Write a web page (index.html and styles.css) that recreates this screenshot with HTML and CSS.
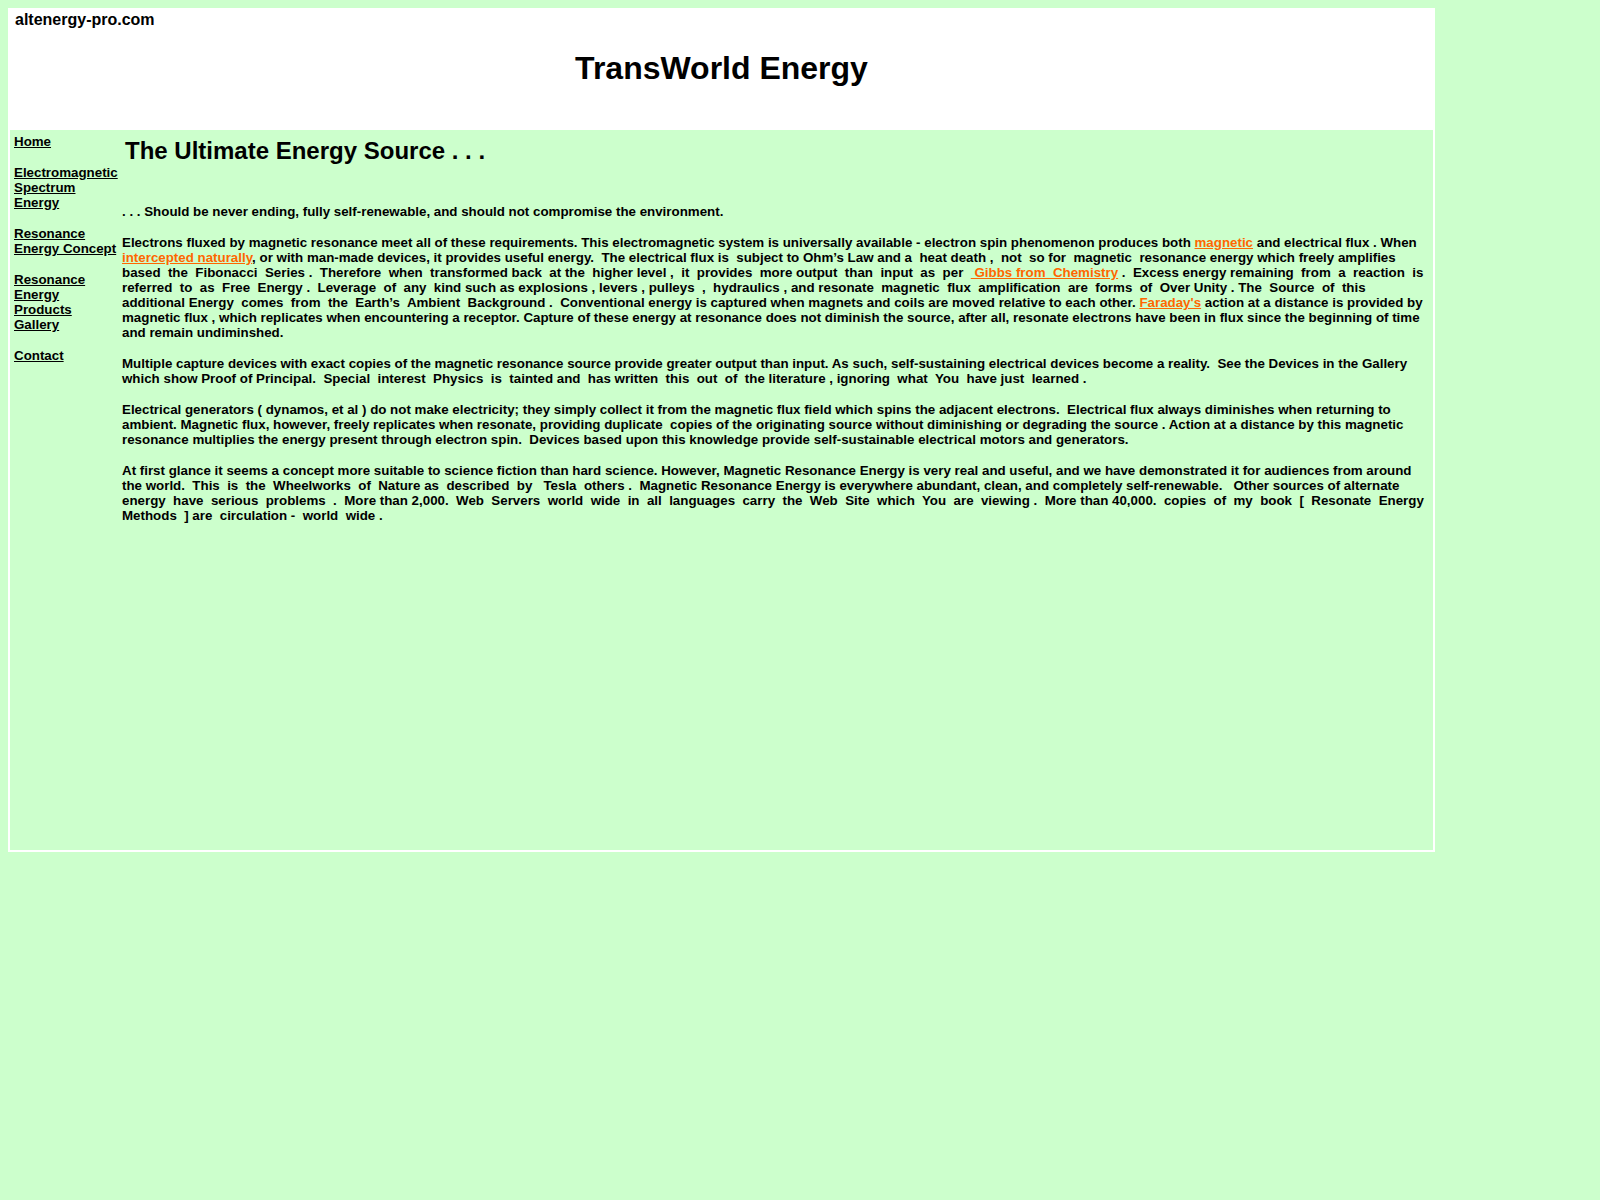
FILE: index.html
```html
<!DOCTYPE html>
<html>
<head>
<meta charset="utf-8">
<title>TransWorld Energy</title>
<link rel="stylesheet" href="styles.css">
</head>
<body>
<div class="page">
  <header class="masthead">
    <div class="site">altenergy-pro.com</div>
    <h1 class="brand">TransWorld Energy</h1>
  </header>
  <div class="body">
    <nav class="nav">
      <a href="#">Home</a>
      <a href="#">Electromagnetic Spectrum Energy</a>
      <a href="#">Resonance Energy Concept</a>
      <a href="#">Resonance Energy Products Gallery</a>
      <a href="#">Contact</a>
    </nav>
    <main class="main">
      <h2 class="title">The Ultimate Energy Source . . .</h2>
      <p>. . . Should be never ending, fully self-renewable, and should not compromise the environment.</p>
      <p>Electrons fluxed by magnetic resonance meet all of these requirements. This electromagnetic system is universally available - electron spin phenomenon produces both <a class="hot" href="#">magnetic</a> and electrical flux . When<br><a class="hot" href="#">intercepted naturally</a>, or with man-made devices, it provides useful energy.&nbsp; The electrical flux is&nbsp; subject to Ohm’s Law and a&nbsp; heat death ,&nbsp; not&nbsp; so for&nbsp; magnetic&nbsp; resonance energy which freely amplifies<br>based&nbsp; the&nbsp; Fibonacci&nbsp; Series .&nbsp; Therefore&nbsp; when&nbsp; transformed back&nbsp; at the&nbsp; higher level ,&nbsp; it&nbsp; provides&nbsp; more output&nbsp; than&nbsp; input&nbsp; as&nbsp; per&nbsp; <a class="hot" href="#">&nbsp;Gibbs from&nbsp; Chemistry</a> .&nbsp; Excess energy remaining&nbsp; from&nbsp; a&nbsp; reaction&nbsp; is<br>referred&nbsp; to&nbsp; as&nbsp; Free&nbsp; Energy .&nbsp; Leverage&nbsp; of&nbsp; any&nbsp; kind such as explosions , levers , pulleys&nbsp; ,&nbsp; hydraulics , and resonate&nbsp; magnetic&nbsp; flux&nbsp; amplification&nbsp; are&nbsp; forms&nbsp; of&nbsp; Over Unity . The&nbsp; Source&nbsp; of&nbsp; this<br>additional Energy&nbsp; comes&nbsp; from&nbsp; the&nbsp; Earth’s&nbsp; Ambient&nbsp; Background .&nbsp; Conventional energy is captured when magnets and coils are moved relative to each other. <a class="hot" href="#">Faraday's</a> action at a distance is provided by<br>magnetic flux , which replicates when encountering a receptor. Capture of these energy at resonance does not diminish the source, after all, resonate electrons have been in flux since the beginning of time<br>and remain undiminshed.</p>
      <p>Multiple capture devices with exact copies of the magnetic resonance source provide greater output than input. As such, self-sustaining electrical devices become a reality.&nbsp; See the Devices in the Gallery<br>which show Proof of Principal.&nbsp; Special&nbsp; interest&nbsp; Physics&nbsp; is&nbsp; tainted and&nbsp; has written&nbsp; this&nbsp; out&nbsp; of&nbsp; the literature , ignoring&nbsp; what&nbsp; You&nbsp; have just&nbsp; learned .</p>
      <p>Electrical generators ( dynamos, et al ) do not make electricity; they simply collect it from the magnetic flux field which spins the adjacent electrons.&nbsp; Electrical flux always diminishes when returning to<br>ambient. Magnetic flux, however, freely replicates when resonate, providing duplicate&nbsp; copies of the originating source without diminishing or degrading the source . Action at a distance by this magnetic<br>resonance multiplies the energy present through electron spin.&nbsp; Devices based upon this knowledge provide self-sustainable electrical motors and generators.</p>
      <p>At first glance it seems a concept more suitable to science fiction than hard science. However, Magnetic Resonance Energy is very real and useful, and we have demonstrated it for audiences from around<br>the world.&nbsp; This&nbsp; is&nbsp; the&nbsp; Wheelworks&nbsp; of&nbsp; Nature as&nbsp; described&nbsp; by&nbsp;&nbsp; Tesla&nbsp; others .&nbsp; Magnetic Resonance Energy is everywhere abundant, clean, and completely self-renewable.&nbsp;&nbsp; Other sources of alternate<br>energy&nbsp; have&nbsp; serious&nbsp; problems&nbsp; .&nbsp; More than 2,000.&nbsp; Web&nbsp; Servers&nbsp; world&nbsp; wide&nbsp; in&nbsp; all&nbsp; languages&nbsp; carry&nbsp; the&nbsp; Web&nbsp; Site&nbsp; which&nbsp; You&nbsp; are&nbsp; viewing .&nbsp; More than 40,000.&nbsp; copies&nbsp; of&nbsp; my&nbsp; book&nbsp; [&nbsp; Resonate&nbsp; Energy<br>Methods&nbsp; ] are&nbsp; circulation -&nbsp; world&nbsp; wide .</p>
    </main>
  </div>
</div>
</body>
</html>
```

FILE: styles.css
```css
html, body {
  margin: 0;
  padding: 0;
}
body {
  background: #ccffcc;
  padding: 8px;
  font-family: "Liberation Sans", Arial, sans-serif;
  color: #000;
}
.page {
  width: 1423px;
  background: #ffffff;
  padding: 0 2px 2px 2px;
}
.masthead {
  height: 122px;
  box-sizing: border-box;
  padding: 3px 5px 0 5px;
}
.site {
  font-size: 16px;
  font-weight: bold;
  line-height: 18px;
}
.brand {
  margin: 21px 0 0 0;
  font-size: 32px;
  font-weight: bold;
  line-height: 37px;
  text-align: center;
}
.body {
  display: flex;
  height: 720px;
  background: #ccffcc;
}
.nav {
  width: 105px;
  flex: none;
  padding: 4px 0 0 4px;
  display: flex;
  flex-direction: column;
  align-items: flex-start;
  gap: 16px;
  font-size: 10pt;
  line-height: 15px;
  font-weight: bold;
}
.nav a {
  color: #000;
  text-decoration: underline;
}
.main {
  flex: 1;
  padding: 5px 4px 0 3px;
  font-size: 10pt;
  line-height: 15px;
  font-weight: bold;
  white-space: nowrap;
}
.title {
  margin: 2px 0 39px 3px;
  font-size: 24px;
  line-height: 28px;
  font-weight: bold;
}
.main p {
  margin: 0 0 16px 0;
}
.hot {
  color: #ff6600;
  text-decoration: underline;
}
```
